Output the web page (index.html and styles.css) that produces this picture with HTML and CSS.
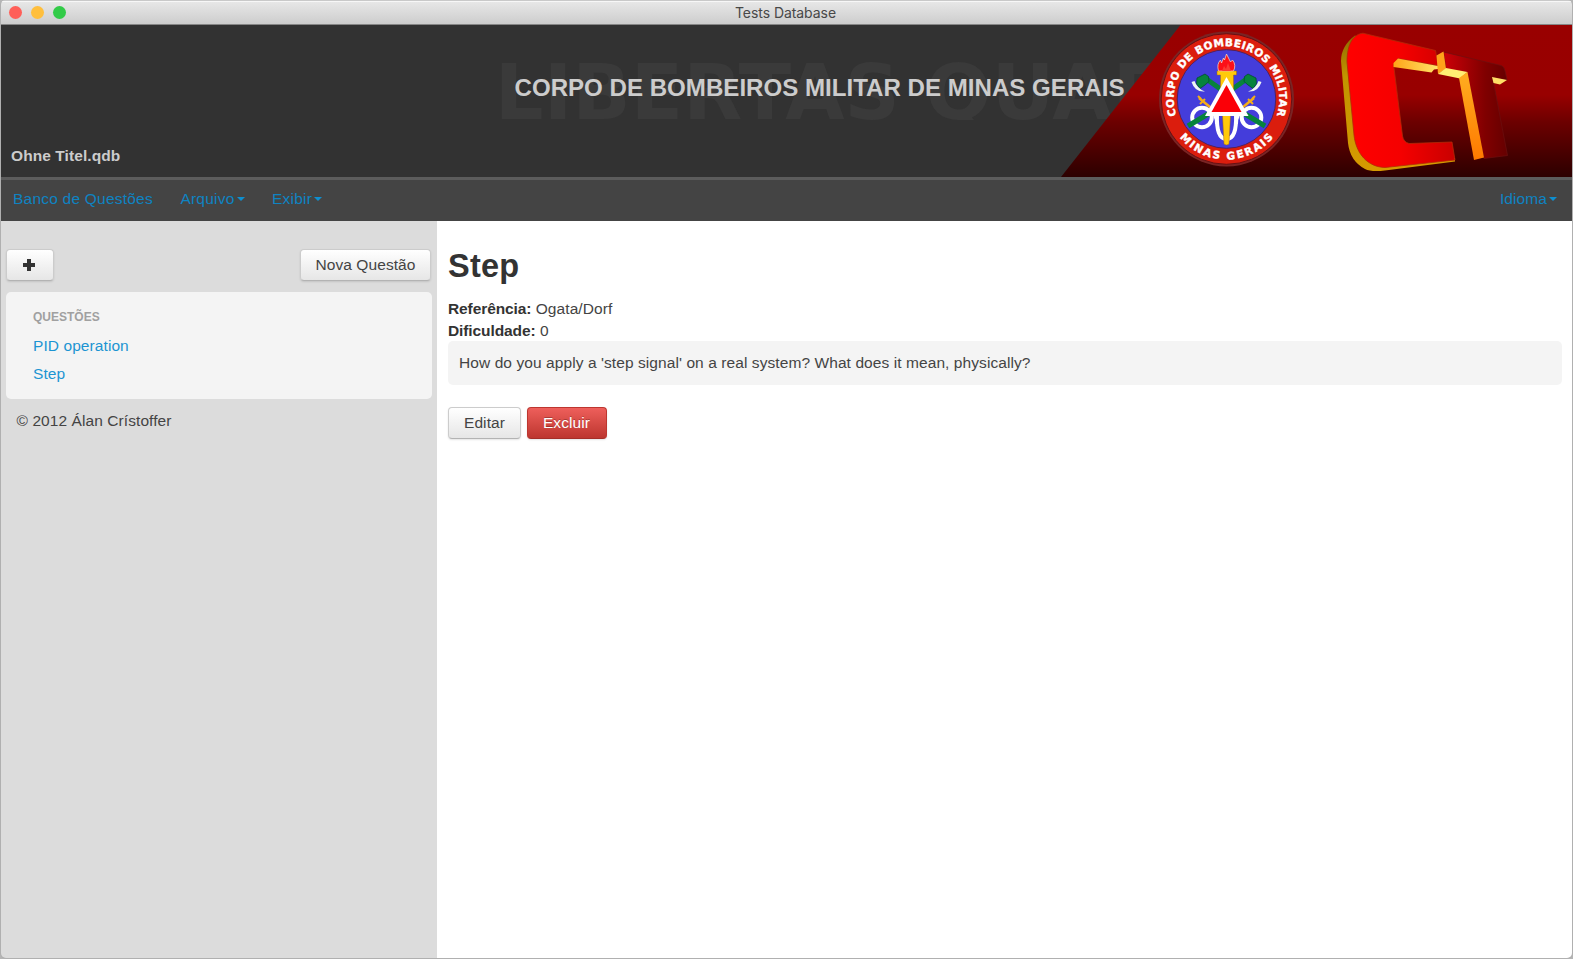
FILE: index.html
```html
<!DOCTYPE html>
<html lang="pt-BR">
<head>
<meta charset="utf-8">
<title>Tests Database</title>
<link rel="stylesheet" href="styles.css">
</head>
<body>
<div class="window">
  <div class="titlebar">
    <div class="lights"><span class="light close"></span><span class="light minimize"></span><span class="light maximize"></span></div>
    <span class="window-title">Tests Database</span>
  </div>
  <header class="banner">
    <strong class="filename">Ohne Titel.qdb</strong>
    <svg class="banner-art" viewBox="490 25 1083 152" width="1083" height="152">
      <defs>
        <linearGradient id="stripe" x1="0" y1="0" x2="0" y2="1"><stop offset="0" stop-color="#900"/><stop offset=".46" stop-color="#980000"/><stop offset=".64" stop-color="#6c0000"/><stop offset="1" stop-color="#2c0000"/></linearGradient>
        <linearGradient id="faceC" x1="0" y1="0" x2="1" y2="0"><stop offset="0" stop-color="#f00"/><stop offset=".5" stop-color="#f50000"/><stop offset="1" stop-color="#c90000"/></linearGradient>
        <linearGradient id="faceT" x1="0" y1="0" x2="1" y2="0"><stop offset="0" stop-color="#cd0008"/><stop offset=".65" stop-color="#800000"/><stop offset="1" stop-color="#650000"/></linearGradient>
        <linearGradient id="sideC" x1="0" y1="0" x2="0" y2="1"><stop offset="0" stop-color="#8e6a00"/><stop offset=".3" stop-color="#c19400"/><stop offset="1" stop-color="#d69a00"/></linearGradient>
        <linearGradient id="gold" x1="0" y1="0" x2="1" y2="0"><stop offset="0" stop-color="#ffa318"/><stop offset="1" stop-color="#ffe468"/></linearGradient>
        <linearGradient id="stem" x1="0" y1="0" x2="0" y2="1"><stop offset="0" stop-color="#ffae20"/><stop offset="1" stop-color="#ff7900"/></linearGradient>
        <path id="arcTop" d="M1186.050 132.940A52.800 52.800 0 1 1 1266.950 132.940"/>
        <path id="arcBottom" d="M1166 99A60.500 60.500 0 0 0 1287 99"/>
        <clipPath id="mottoBand"><path d="M490 25h700v95h-700z"/></clipPath>
      </defs>
      <g class="motto" clip-path="url(#mottoBand)">
        <text x="494.800" y="119" textLength="405" lengthAdjust="spacingAndGlyphs">LIBERTAS</text>
        <text x="925.500" y="119" textLength="240" lengthAdjust="spacingAndGlyphs">QUAE</text>
      </g>
      <path d="M1180.500 25H1573V177H1061Z" fill="url(#stripe)"/>
      <text class="org" x="514.500" y="95.500" textLength="610" lengthAdjust="spacingAndGlyphs">CORPO DE BOMBEIROS MILITAR DE MINAS GERAIS</text>
      <g class="seal">
        <circle cx="1226.500" cy="99" r="67.500" fill="#792525"/>
        <circle cx="1226.500" cy="99" r="65.300" fill="#db1d0d" stroke="#661014" stroke-width="1"/>
        <circle cx="1226.500" cy="99" r="49.300" fill="#443ddb" stroke="#552059" stroke-width="1"/>
        <text class="seal-text" text-anchor="middle" textLength="199"><textPath href="#arcTop" startOffset="50%">CORPO DE BOMBEIROS MILITAR</textPath></text>
        <text class="seal-text" text-anchor="middle" textLength="107"><textPath href="#arcBottom" startOffset="50%">MINAS GERAIS</textPath></text>
        <g fill="none" stroke="#fff" stroke-width="4"><circle cx="1202" cy="117.500" r="9.800"/><circle cx="1251.500" cy="117.500" r="9.800"/><path d="M1217 114Q1216 139 1226.500 139T1236 114M1209 110Q1217 113 1217 124M1244 110Q1236 113 1236 124"/></g>
        <path d="M1199 98L1216 112M1254 98L1237 112" stroke="#f4ad18" stroke-width="2.500"/>
        <path d="M1205 78L1226 93M1248 78L1227 93M1188 126L1208 114M1265 126L1245 114" stroke="#07833c" stroke-width="5"/>
        <path d="M1197 78l8-4 3.500 2.500.5 5-4 3.500-5 3.500-3.500-4.500zM1256 78l-8-4-3.500 2.500-.5 5 4 3.500 5 3.500 3.500-4.500z" fill="#07833c" stroke="#00472a" stroke-width=".7"/>
        <path d="M1191.500 82L1194.500 81Q1197 88.500 1205 91.500 1195 92.500 1191.500 82zM1261.500 82L1258.500 81Q1256 88.500 1248 91.500 1258 92.500 1261.500 82z" fill="#eef6f2"/>
        <path d="M1198 96l3 3M1255 96l-3 3M1200 104l5-5M1253 104l-5-5" stroke="#f4ad18" stroke-width="2"/>
        <path d="M1217 71h19.500v4h-3v20h-13v-20h-3.500zM1222.500 115h8l-1.500 29q-2.500 2-5 0z" fill="#ffca0a" stroke="#a36516" stroke-width=".5"/>
        <path d="M1218.500 71q-2-7 2-11l1 3 2-5 1 2 2-6 4 8 2-2q4 5 1 11z" fill="#fc1018" stroke="#ffe2c5" stroke-width=".7"/>
        <path d="M1222 71l2-5 2 3 2-6 3 8z" fill="#fc3a34"/>
        <path d="M1226.500 77L1248.500 116H1205z" fill="#fff"/>
        <path d="M1226.500 85L1241.500 112H1211.500z" fill="#fb0007"/>
      </g>
      <g class="ct">
        <path d="M1355 35.500Q1341 46 1341 61L1348 143Q1350 161 1365 169Q1371 172 1385 170.500L1455 161.500V158L1385 150 1365 40z" fill="url(#sideC)"/>
        <path d="M1363 33.200L1435.500 50.500 1438 65.500 1398 58.500 1393.500 64 1402.500 136Q1403.500 142 1409 143.500L1452 142 1455 160 1385 167.500C1368 167 1356 154 1354 135L1347 62C1347 43 1354 34 1363 33.200Z" fill="url(#faceC)" stroke="#b22a08" stroke-width=".8"/>
        <path d="M1398 58.500L1438 66V69L1434 69.500 1431.500 72.500 1393.500 67V63z" fill="url(#gold)"/>
        <path d="M1443.500 52L1501 65.500Q1504 66 1505 71L1507 80 1492.500 77.500 1507.500 155.500 1484 158.500 1467 73 1446 69z" fill="url(#faceT)" stroke="#6b1010" stroke-width=".7"/>
        <path d="M1443.500 51.500L1446 68.500 1438 74 1436.500 55.500z" fill="#ffa21a"/>
        <path d="M1446 68L1467.500 72 1460 78.500 1438 74z" fill="#ffee73"/>
        <path d="M1459 78L1467.500 72 1484 157.500 1474 160z" fill="url(#stem)"/>
        <path d="M1492 77L1507 80 1500 84.500 1493.500 83z" fill="#ffdf66"/>
      </g>
    </svg>
  </header>
  <nav class="nav">
    <a class="brand">Banco de Questões</a>
    <a class="drop">Arquivo</a>
    <a class="drop">Exibir</a>
    <a class="drop lang">Idioma</a>
  </nav>
  <div class="body">
    <aside class="sidebar">
      <div class="toolbar">
        <button class="btn add"><svg width="14" height="14" viewBox="0 0 14 14"><path d="M5 1h4v4h4v4H9v4H5V9H1V5h4z" fill="#333"/></svg></button>
        <button class="btn new">Nova Questão</button>
      </div>
      <div class="list">
        <h6>QUESTÕES</h6>
        <a>PID operation</a>
        <a>Step</a>
      </div>
      <p class="copy">© 2012 Álan Crístoffer</p>
    </aside>
    <main class="content">
      <h1>Step</h1>
      <div class="row"><strong>Referência:</strong> Ogata/Dorf</div>
      <div class="row"><strong>Dificuldade:</strong> 0</div>
      <div class="question">How do you apply a 'step signal' on a real system? What does it mean, physically?</div>
      <div class="actions"><button class="btn edit">Editar</button><button class="btn danger">Excluir</button></div>
    </main>
  </div>
</div>
</body>
</html>
```
FILE: styles.css
```css
* { box-sizing: border-box; }
body { margin: 0; background: #b5b5b5; font: 15.5px/21.6px "Liberation Sans", Arial, sans-serif; letter-spacing: .08px; color: #444; }
.window { width: 1573px; height: 959px; display: flex; flex-direction: column; overflow: hidden; border: solid #b0b0b0; border-width: 0 1px 1px; border-radius: 5px 5px 6px 6px; }
.titlebar { height: 25px; flex: none; display: grid; grid-template-columns: 1fr auto 1fr; align-items: center; background: linear-gradient(#e8e8e8, #cdcdcd); border-top: 1px solid #c9c9c9; border-bottom: 1px solid #868686; box-shadow: inset 0 1px #f7f7f7; }
.lights { display: flex; gap: 9px; padding-left: 8px; }
.light { width: 13px; height: 13px; border-radius: 50%; }
.close { background: #ff5f58; }
.minimize { background: #ffbf3d; }
.maximize { background: #32cb48; }
.window-title { padding-right: 2px; font: 14px/20px Inter, sans-serif; letter-spacing: -.06px; color: #484848; }
.banner { height: 152px; flex: none; display: flex; align-items: flex-end; justify-content: space-between; background: #323232; }
.filename { padding: 0 0 10px 10px; color: #ccc; white-space: nowrap; }
.banner-art { flex: none; display: block; margin-right: -1px; letter-spacing: 0; }
.motto { font: bold 77px "DejaVu Sans", sans-serif; fill: #3a3a3a; }
.org { font: bold 24px "Liberation Sans", sans-serif; fill: #ccc; }
.seal-text { font: bold 10.5px "DejaVu Sans", sans-serif; fill: #fff; stroke: #fff; stroke-width: .4px; }
.nav { height: 44px; flex: none; display: flex; align-items: center; padding: 0 15px 4px 12px; background: #444; border-top: 3px solid #5c5c5c; color: #0e83c2; letter-spacing: .22px; }
.drop { display: flex; align-items: center; gap: 2px; margin-left: 27.500px; }
.drop::after { content: ""; margin-top: 1px; border: 4.500px solid transparent; border-top-color: #0e8fd0; border-bottom: 0; }
.lang { margin-left: auto; letter-spacing: .08px; }
.body { flex: 1; display: flex; }
.sidebar { width: 436px; padding: 28px 5px 0; background: #dcdcdc; }
.toolbar { display: flex; justify-content: space-between; padding-right: 1px; }
.btn { height: 32px; padding: 0; font: inherit; letter-spacing: inherit; color: #444; border: 1px solid #ccc; border-bottom-color: #b3b3b3; border-radius: 4px; background: linear-gradient(#fff, #e6e6e6); box-shadow: 0 1px 2px #0000001c; }
.add { width: 48px; display: grid; place-items: center; padding-right: 2px; }
.new { width: 131px; }
.list { height: 107px; margin-top: 11px; padding: 14px 27px; display: flex; flex-direction: column; border-radius: 5px; background: #f4f4f4; }
.list h6 { margin: 0 0 3px; font: bold 12px/23px "Liberation Sans", sans-serif; letter-spacing: 0; color: #a0a0a0; }
.list a { line-height: 28.400px; color: #1c94d2; }
.copy { margin: 11px 10.500px; }
.content { flex: 1; padding: 24px 10px 0 11px; background: #fff; }
h1 { margin: 0 0 10px; font: bold 32.500px/43px "Liberation Sans", sans-serif; letter-spacing: .2px; color: #333; }
.row strong { color: #333; letter-spacing: -.1px; }
.question { height: 44px; padding: 11px; border-radius: 5px; background: #f4f4f4; }
.actions { display: flex; gap: 5.500px; margin-top: 22px; }
.edit { width: 73px; }
.danger { width: 80px; color: #fff; border-color: #bd362f #bd362f #a52e28; background: linear-gradient(#ee5f5b, #bd362f); text-shadow: 0 -1px #00000040; }
```
